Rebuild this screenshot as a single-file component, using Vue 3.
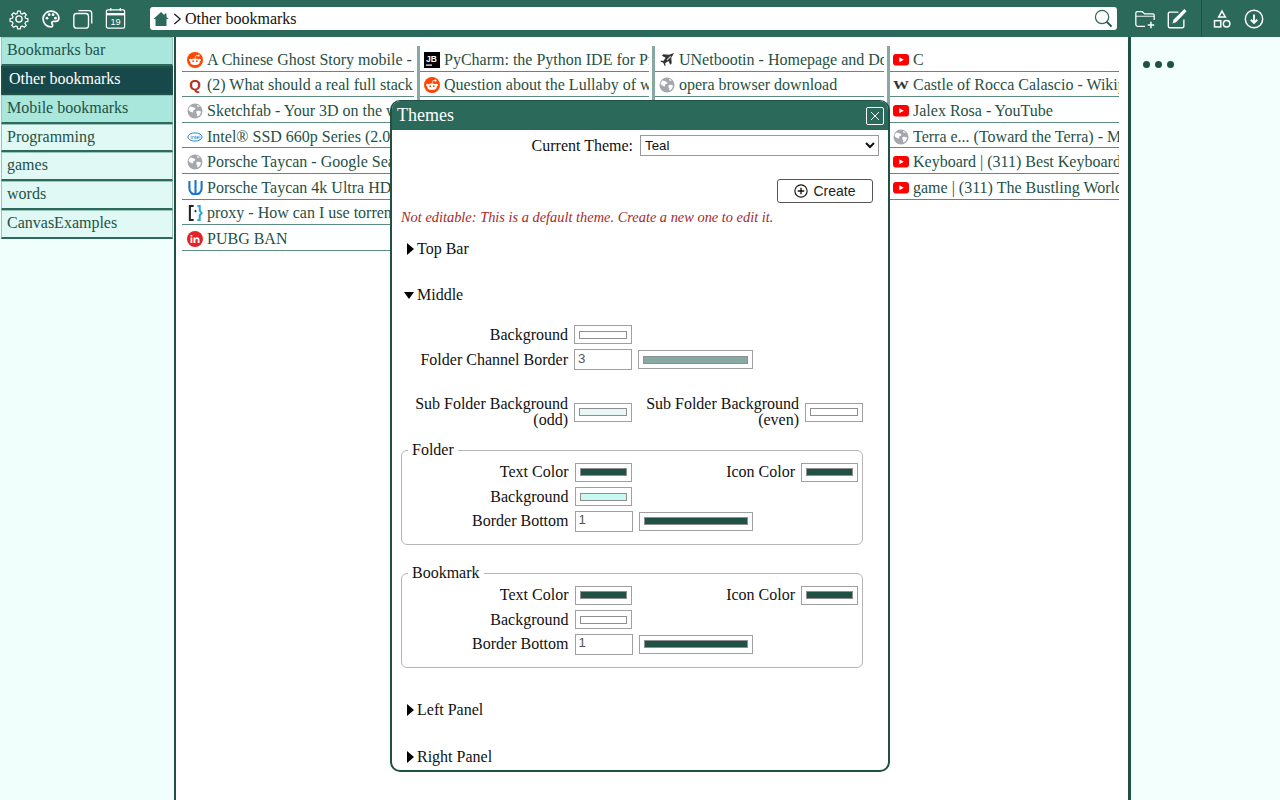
<script setup>
const folders = [
  { name: "Bookmarks bar", kind: "open" },
  { name: "Other bookmarks", kind: "active" },
  { name: "Mobile bookmarks", kind: "open" },
  { name: "Programming", kind: "" },
  { name: "games", kind: "" },
  { name: "words", kind: "" },
  { name: "CanvasExamples", kind: "" }
];

const columns = [
  [
    { icon: "reddit", title: "A Chinese Ghost Story mobile - Reddit" },
    { icon: "quora", title: "(2) What should a real full stack developer know" },
    { icon: "globe", title: "Sketchfab - Your 3D on the web" },
    { icon: "intel", title: "Intel® SSD 660p Series (2.0TB)" },
    { icon: "globe", title: "Porsche Taycan - Google Search" },
    { icon: "unreal", title: "Porsche Taycan 4k Ultra HD Wallpaper" },
    { icon: "proxy", title: "proxy - How can I use torrents" },
    { icon: "pubg", title: "PUBG BAN" }
  ],
  [
    { icon: "jb", title: "PyCharm: the Python IDE for Professional Developers" },
    { icon: "reddit", title: "Question about the Lullaby of woe" }
  ],
  [
    { icon: "plane", title: "UNetbootin - Homepage and Downloads" },
    { icon: "globe", title: "opera browser download" }
  ],
  [
    { icon: "yt", title: "C" },
    { icon: "wiki", title: "Castle of Rocca Calascio - Wikipedia" },
    { icon: "yt", title: "Jalex Rosa - YouTube" },
    { icon: "globe", title: "Terra e... (Toward the Terra) - MyAnimeList" },
    { icon: "yt", title: "Keyboard | (311) Best Keyboards of the Year" },
    { icon: "yt", title: "game | (311) The Bustling World" }
  ]
];

const groups = ["Folder", "Bookmark"];
</script>

<template>
  <div class="page">
    <header class="topbar">
      <div class="tools">
        <button class="tool">
          <svg viewBox="0 0 24 24" width="22" height="22" fill="none" stroke="#fff" stroke-width="1.5" stroke-linejoin="round"><circle cx="12" cy="12" r="3.4" /><path d="M10.3 2.5h3.4l.5 2.8 1.9.8 2.3-1.6 2.4 2.4-1.6 2.3.8 1.9 2.8.5v3.4l-2.8.5-.8 1.9 1.6 2.3-2.4 2.4-2.3-1.6-1.9.8-.5 2.8h-3.4l-.5-2.8-1.9-.8-2.3 1.6-2.4-2.4 1.6-2.3-.8-1.9-2.8-.5v-3.4l2.8-.5.8-1.9-1.6-2.3 2.4-2.4 2.3 1.6 1.9-.8z" transform="translate(1.2 1.2) scale(.9)" /></svg>
        </button>
        <button class="tool">
          <svg viewBox="0 0 24 24" width="20" height="20"><path fill="none" stroke="#fff" stroke-width="2" d="M12 2.500C6.800 2.500 2.500 6.500 2.500 11.800c0 5.400 4.200 9.700 9.500 9.700 1.200 0 2-.8 2-1.800 0-.6-.2-1-.5-1.400-.4-.5-.6-1-.6-1.500 0-1.200 1-2 2.300-2h2.300c2.400 0 4-1.700 4-4 0-4.700-4.300-8.300-9.500-8.300z" /><circle cx="7.200" cy="11" r="1.700" fill="#fff" /><circle cx="9.800" cy="6.800" r="1.700" fill="#fff" /><circle cx="14.500" cy="6.800" r="1.700" fill="#fff" /><circle cx="17.400" cy="11" r="1.700" fill="#fff" /></svg>
        </button>
        <button class="tool">
          <svg viewBox="0 0 24 24" width="22" height="22" fill="none" stroke="#fff" stroke-width="1.500"><rect x="2" y="6" width="16" height="16" rx="3" /><path d="M7 2.800h11.500a3 3 0 0 1 3 3V17" /></svg>
        </button>
        <button class="tool">
          <svg viewBox="0 0 24 24" width="23" height="23" fill="none" stroke="#fff" stroke-width="1.300"><rect x="2.500" y="3" width="19" height="19" rx="1.500" /><path d="M2.500 7.500h19" stroke-width="2.500" /><path d="M7 1v3M17 1v3" /><text x="12" y="18.500" text-anchor="middle" fill="#fff" stroke="none" font-size="9.500" font-family="Liberation Sans, sans-serif">19</text></svg>
        </button>
      </div>

      <div class="address">
        <svg viewBox="0 0 16 16" width="16" height="16"><path fill="#2b6a5c" d="M8 1 .5 8h2v7h11V8h2l-2-1.900V2.500h-2v1.700z" /></svg>
        <svg class="chevron" viewBox="0 0 10 14" width="9" height="14" fill="none" stroke="#111" stroke-width="1.300"><path d="M1.500 1.500 8 7l-6.500 5.500" /></svg>
        <span class="crumb">Other bookmarks</span>
        <svg class="search" viewBox="0 0 20 20" width="19" height="19" fill="none" stroke="#2b6a5c" stroke-width="1.300"><circle cx="8.500" cy="8.500" r="7" /><path d="m13.500 13.500 5 5" stroke="#1f5145" stroke-width="2" /></svg>
      </div>

      <div class="tools right-a">
        <button class="tool">
          <svg viewBox="0 0 24 24" width="22" height="22" fill="none" stroke="#fff" stroke-width="1.400"><path d="M12 20H4a2 2 0 0 1-2-2V5.500a1.500 1.500 0 0 1 1.500-1.500H9l2.500 2.500h9A1.500 1.500 0 0 1 22 8v5" /><path d="M2 9h20" stroke-width="1" /><path d="M18.500 15v7M15 18.500h7" stroke-width="1.600" /></svg>
        </button>
        <button class="tool">
          <svg viewBox="0 0 24 24" width="22" height="22" fill="none" stroke="#fff" stroke-width="1.500"><path d="M19.500 12.500V20a1.500 1.500 0 0 1-1.500 1.500H4A1.500 1.500 0 0 1 2.500 20V6A1.500 1.500 0 0 1 4 4.500h9.500" /><path fill="#fff" stroke="none" d="M20 1l2.500 2.500L11 15.500l-4 1.300 1.200-4z" /></svg>
        </button>
      </div>
      <div class="tools right-b">
        <button class="tool">
          <svg viewBox="0 0 24 24" width="20" height="20" fill="none" stroke="#fff" stroke-width="1.800"><path d="m12 2.500 4 7H8z" /><rect x="3" y="14" width="7.500" height="7.500" /><circle cx="17.500" cy="17.700" r="3.900" /></svg>
        </button>
        <button class="tool">
          <svg viewBox="0 0 24 24" width="22" height="22" fill="none" stroke="#fff" stroke-width="1.600"><circle cx="12" cy="12" r="9.500" /><path d="M12 7v9M8.500 12.800 12 16.300l3.500-3.500" stroke-width="2" /></svg>
        </button>
      </div>
    </header>

    <div class="main">
      <nav class="left">
        <div v-for="folder in folders" :key="folder.name" class="folder" :class="folder.kind">{{ folder.name }}</div>
      </nav>

      <section class="channel">
        <div v-for="(col, c) in columns" :key="c" class="column">
          <div v-for="item in col" :key="item.title" class="mark">
            <span class="favicon">
              <svg v-if="item.icon === 'reddit'" viewBox="0 0 16 16" width="16" height="16"><circle cx="8" cy="8" r="8" fill="#ff4500" /><ellipse cx="8" cy="9.800" rx="4.800" ry="3.200" fill="#fff" /><circle cx="3.300" cy="8" r="1.200" fill="#fff" /><circle cx="12.700" cy="8" r="1.200" fill="#fff" /><circle cx="11.500" cy="3.600" r="1.100" fill="#fff" /><path d="M8 6.500 9 3.500l2.500.2" stroke="#fff" stroke-width=".7" fill="none" /><circle cx="6.200" cy="9.200" r=".9" fill="#ff4500" /><circle cx="9.800" cy="9.200" r=".9" fill="#ff4500" /></svg>
              <span v-else-if="item.icon === 'quora'" class="quora">Q</span>
              <svg v-else-if="item.icon === 'globe'" viewBox="0 0 16 16" width="16" height="16"><circle cx="8" cy="8" r="7.500" fill="#a4a7ad" /><path fill="#fff" d="M3.500 3.500c1.500 0 3 .5 4.500 1.500.8.800.2 2-1 2-.8 0-1 .8-.8 1.500.3.800-.3 1.200-1 .8C3.500 9 2 8 1.500 6.800c.3-1.300 1-2.500 2-3.300zM10 8c1-.5 2.500-.3 4 .5-.2 2-1.300 3.800-3 5-.8-.3-1-1.200-.8-2 .2-.8-.5-1-.8-1.600C9.200 9.200 9.300 8.400 10 8zM10 2c1 .2 2 .7 2.700 1.400-.6.500-1.600.6-2.200.2-.5-.4-.7-1-.5-1.600z" /></svg>
              <svg v-else-if="item.icon === 'intel'" viewBox="0 0 18 12" width="17" height="12"><ellipse cx="9" cy="6" rx="8" ry="4.600" fill="none" stroke="#0f7dc2" stroke-width="1" /><text x="9.500" y="8" text-anchor="middle" font-size="6" font-family="Liberation Sans, sans-serif" fill="#0f6cb0">intel</text></svg>
              <svg v-else-if="item.icon === 'unreal'" viewBox="0 0 16 16" width="15" height="15" fill="none" stroke="#1a73c9" stroke-width="2.200"><path d="M1.500 1v8a6.500 6.500 0 0 0 13 0V1M8 0v15" /></svg>
              <svg v-else-if="item.icon === 'proxy'" viewBox="0 0 16 18" width="15" height="18" fill="none" stroke-width="2.200"><path d="M6 1.500H2v15h4" stroke="#222" /><path d="M10 1.500h2.500v5l2 2.500-2 2.500v5H10" stroke="#2fa8e0" /><circle cx="8" cy="7" r="1.100" fill="#222" /></svg>
              <svg v-else-if="item.icon === 'pubg'" viewBox="0 0 16 16" width="16" height="16"><circle cx="8" cy="8" r="8" fill="#e2242a" /><path fill="#fff" d="M3.500 6.500h1.800V12H3.500zM3.500 4h1.800v1.500H3.500zM6.500 6.500h1.700v.8c.5-.7 1.200-1 2-1 1.400 0 2.300.9 2.300 2.600V12h-1.800V9.200c0-.9-.3-1.300-1-1.300s-1.300.5-1.300 1.400V12H6.500z" /></svg>
              <svg v-else-if="item.icon === 'jb'" viewBox="0 0 16 16" width="16" height="16"><rect width="16" height="16" fill="#000" /><text x="2" y="9.500" font-size="8.500" font-weight="700" font-family="Liberation Sans, sans-serif" fill="#fff">JB</text><rect x="2" y="12.500" width="6" height="1.200" fill="#fff" /></svg>
              <svg v-else-if="item.icon === 'plane'" viewBox="0 0 16 16" width="15" height="15"><path fill="#333" d="M15 1 9.500 3 3.500 2.500 2 4l4 2L3.500 9.500 1 9l-.5 1 3 1.500L5 15l1-.5-.5-2.500L9 9.500l2 4 1.500-1.500L12 6z" /><path fill="#bbb" d="M11 4 7 8l1 1 4-4z" /></svg>
              <svg v-else-if="item.icon === 'yt'" viewBox="0 0 16 12" width="16" height="12"><rect width="16" height="11.500" rx="3" fill="#f00" /><path d="M6.300 3.200v5.100L10.800 5.750z" fill="#fff" /></svg>
              <span v-else-if="item.icon === 'wiki'" class="wiki">W</span>
            </span>
            <span class="mark-title">{{ item.title }}</span>
          </div>
        </div>
      </section>

      <aside class="right">
        <i class="dot"></i><i class="dot"></i><i class="dot"></i>
      </aside>
    </div>

    <div class="modal">
      <div class="modal-head">
        <span>Themes</span>
        <button class="close">
          <svg viewBox="0 0 10 10" width="10" height="10" fill="none" stroke="#fff" stroke-width="1"><path d="m1 1 8 8M9 1 1 9" /></svg>
        </button>
      </div>

      <div class="theme-row">
        <label class="theme-label">Current Theme:</label>
        <select class="theme-select"><option>Teal</option></select>
      </div>

      <div class="create-row">
        <button class="create">
          <svg viewBox="0 0 16 16" width="14" height="14" fill="none" stroke="#111" stroke-width="1.300"><circle cx="8" cy="8" r="7" /><path d="M8 4.300v7.400M4.300 8h7.400" stroke-width="1.500" /></svg>
          Create
        </button>
      </div>

      <p class="warning">Not editable: This is a default theme. Create a new one to edit it.</p>

      <div class="section-title first"><i class="tri"></i>Top Bar</div>
      <div class="section-title middle"><i class="tri-down"></i>Middle</div>

      <div class="prop top-bg">
        <span class="prop-label">Background</span>
        <input class="swatch" type="color" value="#ffffff" />
      </div>
      <div class="prop channel-prop">
        <span class="prop-label">Folder Channel Border</span>
        <input class="num" type="text" value="3" />
        <input class="swatch wide" type="color" value="#86a9a4" />
      </div>
      <div class="prop sub-prop">
        <span class="prop-label">Sub Folder Background (odd)</span>
        <input class="swatch" type="color" value="#e6f7f5" />
        <span class="prop-label even">Sub Folder Background (even)</span>
        <input class="swatch" type="color" value="#ffffff" />
      </div>

      <fieldset v-for="group in groups" :key="group" class="group">
        <legend>{{ group }}</legend>
        <div class="prop">
          <span class="prop-label">Text Color</span>
          <input class="swatch" type="color" value="#1f5145" />
          <span class="prop-label icon-label">Icon Color</span>
          <input class="swatch" type="color" value="#1f5145" />
        </div>
        <div class="prop">
          <span class="prop-label">Background</span>
          <input class="swatch" type="color" :value="group === 'Folder' ? '#c8f8f2' : '#ffffff'" />
        </div>
        <div class="prop">
          <span class="prop-label">Border Bottom</span>
          <input class="num" type="text" value="1" />
          <input class="swatch wide" type="color" value="#1f5145" />
        </div>
      </fieldset>

      <div class="section-title left-panel"><i class="tri"></i>Left Panel</div>
      <div class="section-title right-panel"><i class="tri"></i>Right Panel</div>
    </div>
  </div>
</template>

<style>
html,
body {
  margin: 0;
  background: #fff;
}
</style>

<style scoped>
* {
  box-sizing: border-box;
}

.page {
  position: relative;
  height: 800px;
  overflow: hidden;
  font-family: "Liberation Serif", "Times New Roman", serif;
  font-size: 16px;
  color: #1f5145;
  display: flex;
  flex-direction: column;
}

.topbar {
  height: 37px;
  flex: none;
  display: flex;
  align-items: center;
  background: #2b695b;
}

.tools {
  display: flex;
  align-items: center;
}

.tools:first-child {
  padding-left: 3px;
  width: 150px;
}

.tool {
  width: 32px;
  height: 37px;
  padding: 0;
  border: 0;
  background: none;
  display: flex;
  align-items: center;
  justify-content: center;
}

.address {
  width: 967px;
  height: 23px;
  background: #fff;
  border-radius: 3px;
  display: flex;
  align-items: center;
  padding: 0 3px;
  color: #111;
}

.chevron {
  margin-left: 4px;
}

.crumb {
  margin-left: 3px;
}

.search {
  margin-left: auto;
  margin-right: 1px;
}

.right-a {
  margin-left: 12px;
  width: 73px;
  height: 37px;
  border-right: 1px solid #1f5145;
}

.right-b {
  padding-left: 4px;
}

.main {
  flex: 1;
  display: flex;
  min-height: 0;
}

.left {
  width: 176px;
  flex: none;
  background: #f0fffc;
  border-right: 2px solid #1f5145;
}

.folder {
  height: 28.850px;
  line-height: 23px;
  padding-left: 5px;
  margin-left: 1px;
  margin-right: 1px;
  background: #e0f9f5;
  border: 1px solid #9cc4bb;
  border-bottom: 2px solid #2b6a5c;
}

.folder.open {
  background: #a9e6dc;
}

.folder.active {
  background: #17494b;
  color: #fff;
  border: 2px solid #1f5145;
  line-height: 21px;
  padding-left: 6px;
}

.channel {
  flex: 1;
  min-width: 0;
  display: flex;
  align-items: flex-start;
  padding: 9px 0 0 6px;
  background: #fff;
}

.column {
  width: 235px;
  height: 205px;
  flex: none;
  padding-right: 3px;
  border-right: 3px solid #86a9a4;
}

.column:first-child {
  width: 238px;
}

.column:last-child {
  width: 229px;
  padding-right: 0;
  border-right: 0;
}

.mark {
  height: 25.600px;
  display: flex;
  align-items: center;
  padding: 3px 0 0 4px;
  border-bottom: 1px solid #5e8b81;
  overflow: hidden;
  white-space: nowrap;
}

.column:first-child .mark {
  padding-left: 5px;
}

.column:last-child .mark {
  padding-left: 3px;
}

.favicon {
  width: 16px;
  flex: none;
  display: flex;
  justify-content: center;
  margin-right: 4px;
}

.mark-title {
  overflow: hidden;
}

.quora {
  color: #b0321c;
  font-family: "Liberation Sans", Arial, sans-serif;
  font-weight: 700;
  font-size: 15px;
  line-height: 16px;
}

.wiki {
  color: #333;
  font-weight: 700;
  font-size: 16px;
  line-height: 16px;
  transform: scaleY(0.75);
}

.right {
  width: 152px;
  flex: none;
  background: #f2fffd;
  border-left: 3px solid #1f5145;
  padding: 24px 0 0 12px;
  display: flex;
  align-items: flex-start;
  gap: 5px;
}

.dot {
  width: 7px;
  height: 7px;
  border-radius: 50%;
  background: #1f5145;
}

.modal {
  position: absolute;
  left: 390px;
  top: 100px;
  width: 500px;
  height: 672px;
  background: #fff;
  border: 2px solid #1f5145;
  border-top-width: 1px;
  border-radius: 10px;
  overflow: hidden;
  color: #111;
}

.modal-head {
  height: 29px;
  background: #2b695b;
  color: #fff;
  font-size: 18px;
  display: flex;
  align-items: center;
  justify-content: space-between;
  padding: 0 4px 0 5px;
}

.close {
  width: 18px;
  height: 18px;
  padding: 0;
  border: 1px solid #fff;
  border-radius: 2px;
  background: none;
  display: flex;
  align-items: center;
  justify-content: center;
}

.theme-row {
  display: flex;
  align-items: center;
  justify-content: flex-end;
  gap: 7px;
  margin-top: 5px;
  padding-right: 9px;
}

.theme-select {
  width: 239px;
  height: 21px;
  border: 1px solid #999;
  border-radius: 0;
  background: #fff;
  padding: 0;
  font-family: "Liberation Sans", Arial, sans-serif;
  font-size: 13.300px;
  color: #111;
}

.create-row {
  display: flex;
  justify-content: flex-end;
  margin-top: 23px;
  padding-right: 15px;
}

.create {
  width: 96px;
  height: 24px;
  border: 1px solid #555;
  border-radius: 3px;
  background: #fff;
  font-family: "Liberation Sans", Arial, sans-serif;
  font-size: 14px;
  color: #222;
  display: flex;
  align-items: center;
  justify-content: center;
  gap: 5px;
  padding: 0;
}

.warning {
  margin: 5px 0 0 9px;
  font-size: 14.400px;
  font-style: italic;
  color: #a52a2a;
  line-height: 18px;
}

.section-title {
  display: flex;
  align-items: center;
  height: 20px;
  padding-left: 15px;
  font-size: 16px;
}

.section-title.first {
  margin-top: 13px;
}

.section-title.middle {
  margin-top: 26px;
  padding-left: 12px;
}

.section-title.left-panel {
  margin-top: 32px;
}

.section-title.right-panel {
  margin-top: 27px;
}

.tri {
  width: 0;
  height: 0;
  margin-right: 3px;
  border-style: solid;
  border-width: 6.500px 0 6.500px 7.500px;
  border-color: transparent transparent transparent #000;
}

.tri-down {
  width: 0;
  height: 0;
  margin-right: 3px;
  border-style: solid;
  border-width: 7.500px 5.500px 0 5.500px;
  border-color: #000 transparent transparent transparent;
}

.prop {
  display: flex;
  align-items: center;
}

.prop-label {
  width: 176px;
  flex: none;
  margin-right: 6px;
  text-align: right;
  line-height: 16px;
}

.swatch {
  width: 58px;
  height: 19px;
  flex: none;
  padding: 0;
  margin: 0;
  border: 1px solid #a0a0a0;
  background: #fff;
}

.swatch::-webkit-color-swatch-wrapper {
  padding: 4.500px 4px;
}

.swatch::-webkit-color-swatch {
  border: 1px solid #8f8f8f;
}

.swatch.wide {
  width: 115px;
  margin-left: 6px;
}

.num {
  width: 58px;
  height: 21px;
  flex: none;
  border: 1px solid #a0a0a0;
  padding: 0 3px 3px;
  background: #fff;
  font-family: "Liberation Sans", Arial, sans-serif;
  font-size: 13.300px;
  color: #555;
}

.top-bg {
  margin-top: 20px;
}

.channel-prop {
  margin-top: 5px;
}

.sub-prop {
  margin-top: 26px;
}

.sub-prop .even {
  width: 167px;
  margin-right: 6px;
}

.group {
  margin: 14px 0 20px 9px;
  width: 462px;
  height: 103px;
  padding: 2px 0 0;
  border: 1px solid #b5b5b5;
  border-radius: 6px;
  background: #fff;
}

.group .prop {
  height: 24.500px;
}

.group .prop-label {
  width: 166.500px;
}

.group .swatch {
  width: 57px;
}

.group .swatch.wide {
  width: 114px;
}

.group legend {
  margin-left: 6px;
  padding: 0 4px;
  font-size: 16px;
  line-height: 16px;
}

.group .icon-label {
  width: 163.500px;
}

.group:last-of-type {
  margin-bottom: 0;
}
</style>
